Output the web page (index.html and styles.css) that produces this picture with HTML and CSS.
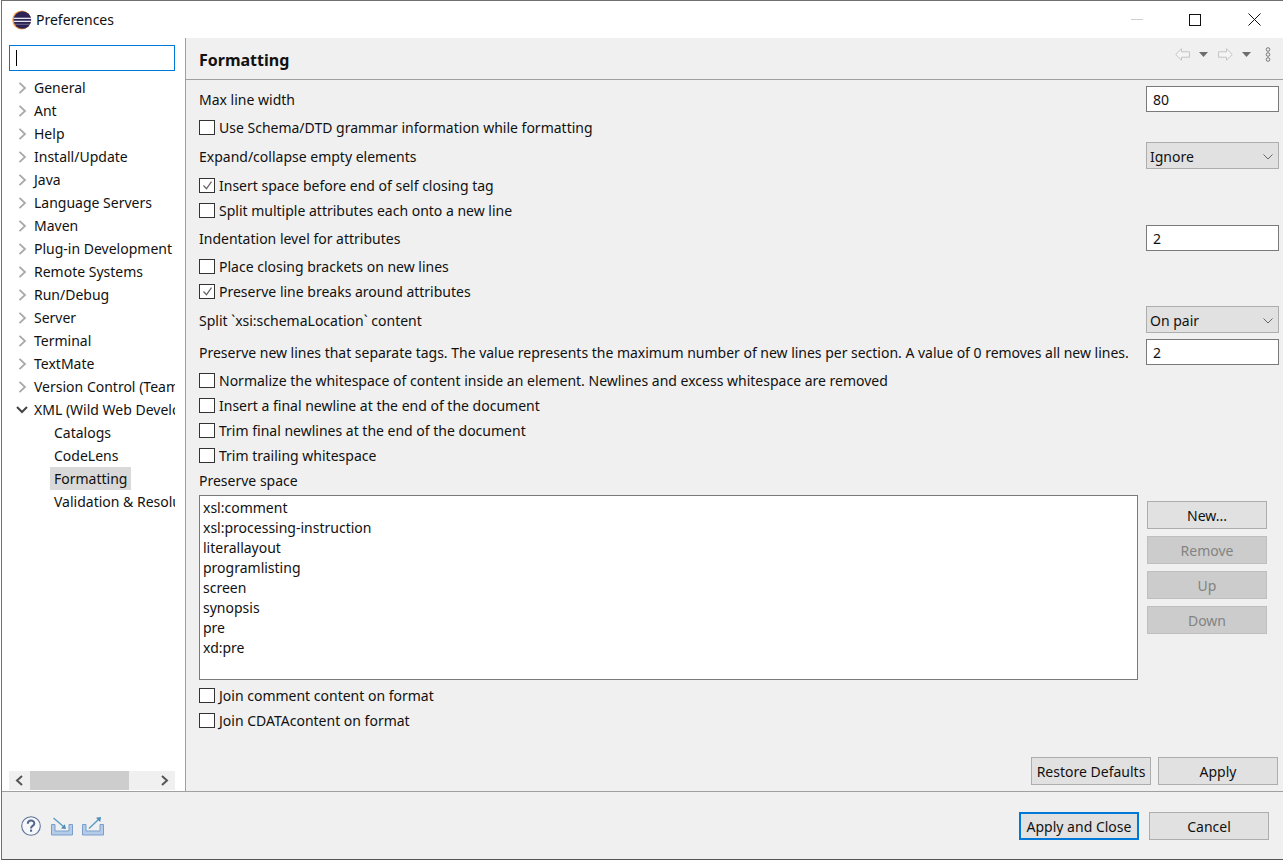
FILE: index.html
```html
<!DOCTYPE html>
<html lang="en">
<head>
<meta charset="utf-8">
<title>Preferences</title>
<link rel="stylesheet" href="styles.css">
</head>
<body>
<div class="window">
  <header class="titlebar">
    <svg class="logo" width="20" height="20" viewBox="0 0 20 20">
      <defs><clipPath id="disc"><circle cx="10.400" cy="10" r="8.800"/></clipPath></defs>
      <circle cx="9.600" cy="10" r="9.400" fill="#f2a14d"/>
      <circle cx="10.400" cy="10" r="8.800" fill="#2c2255"/>
      <g clip-path="url(#disc)">
        <rect x="0" y="7.700" width="20" height="1.300" fill="#e8e6ee"/>
        <rect x="0" y="10.700" width="20" height="1.300" fill="#e8e6ee"/>
        <rect x="0" y="13.800" width="20" height="1" fill="#6f6a92"/>
      </g>
    </svg>
    <span class="title">Preferences</span>
    <div class="winbtns">
      <span class="minimize"></span>
      <span class="maximize"></span>
      <svg class="close" width="13" height="13" viewBox="0 0 13 13"><path d="M.5.5l12 12M12.500.5l-12 12" stroke="#111" fill="none"/></svg>
    </div>
  </header>
  <div class="main">
    <aside class="sidebar">
      <div class="search"><span class="caret"></span></div>
      <ul class="tree">
        <li class="node"><svg class="arrow" width="10" height="12" viewBox="0 0 10 12"><path d="M1.500.8l5.500 5.200-5.500 5.200" fill="none" stroke="#a9a9a9" stroke-width="1.800"/></svg>General</li>
        <li class="node"><svg class="arrow" width="10" height="12" viewBox="0 0 10 12"><path d="M1.500.8l5.500 5.200-5.500 5.200" fill="none" stroke="#a9a9a9" stroke-width="1.800"/></svg>Ant</li>
        <li class="node"><svg class="arrow" width="10" height="12" viewBox="0 0 10 12"><path d="M1.500.8l5.500 5.200-5.500 5.200" fill="none" stroke="#a9a9a9" stroke-width="1.800"/></svg>Help</li>
        <li class="node"><svg class="arrow" width="10" height="12" viewBox="0 0 10 12"><path d="M1.500.8l5.500 5.200-5.500 5.200" fill="none" stroke="#a9a9a9" stroke-width="1.800"/></svg>Install/Update</li>
        <li class="node"><svg class="arrow" width="10" height="12" viewBox="0 0 10 12"><path d="M1.500.8l5.500 5.200-5.500 5.200" fill="none" stroke="#a9a9a9" stroke-width="1.800"/></svg>Java</li>
        <li class="node"><svg class="arrow" width="10" height="12" viewBox="0 0 10 12"><path d="M1.500.8l5.500 5.200-5.500 5.200" fill="none" stroke="#a9a9a9" stroke-width="1.800"/></svg>Language Servers</li>
        <li class="node"><svg class="arrow" width="10" height="12" viewBox="0 0 10 12"><path d="M1.500.8l5.500 5.200-5.500 5.200" fill="none" stroke="#a9a9a9" stroke-width="1.800"/></svg>Maven</li>
        <li class="node"><svg class="arrow" width="10" height="12" viewBox="0 0 10 12"><path d="M1.500.8l5.500 5.200-5.500 5.200" fill="none" stroke="#a9a9a9" stroke-width="1.800"/></svg>Plug-in Development</li>
        <li class="node"><svg class="arrow" width="10" height="12" viewBox="0 0 10 12"><path d="M1.500.8l5.500 5.200-5.500 5.200" fill="none" stroke="#a9a9a9" stroke-width="1.800"/></svg>Remote Systems</li>
        <li class="node"><svg class="arrow" width="10" height="12" viewBox="0 0 10 12"><path d="M1.500.8l5.500 5.200-5.500 5.200" fill="none" stroke="#a9a9a9" stroke-width="1.800"/></svg>Run/Debug</li>
        <li class="node"><svg class="arrow" width="10" height="12" viewBox="0 0 10 12"><path d="M1.500.8l5.500 5.200-5.500 5.200" fill="none" stroke="#a9a9a9" stroke-width="1.800"/></svg>Server</li>
        <li class="node"><svg class="arrow" width="10" height="12" viewBox="0 0 10 12"><path d="M1.500.8l5.500 5.200-5.500 5.200" fill="none" stroke="#a9a9a9" stroke-width="1.800"/></svg>Terminal</li>
        <li class="node"><svg class="arrow" width="10" height="12" viewBox="0 0 10 12"><path d="M1.500.8l5.500 5.200-5.500 5.200" fill="none" stroke="#a9a9a9" stroke-width="1.800"/></svg>TextMate</li>
        <li class="node"><svg class="arrow" width="10" height="12" viewBox="0 0 10 12"><path d="M1.500.8l5.500 5.200-5.500 5.200" fill="none" stroke="#a9a9a9" stroke-width="1.800"/></svg>Version Control (Team)</li>
        <li class="node"><svg class="arrow open" width="12" height="12" viewBox="0 0 12 12"><path d="M1 3l5 5 5-5" fill="none" stroke="#444" stroke-width="2"/></svg>XML (Wild Web Developer)</li>
        <li class="child">Catalogs</li>
        <li class="child">CodeLens</li>
        <li class="child"><span class="selected">Formatting</span></li>
        <li class="child">Validation &amp; Resolution</li>
      </ul>
      <div class="hscroll">
        <svg width="21" height="19" viewBox="0 0 21 19"><path d="M13 5l-5 4.500 5 4.500" fill="none" stroke="#555" stroke-width="2"/></svg>
        <div class="track"><div class="thumb"></div></div>
        <svg width="21" height="19" viewBox="0 0 21 19"><path d="M8 5l5 4.500-5 4.500" fill="none" stroke="#555" stroke-width="2"/></svg>
      </div>
    </aside>
    <section class="content">
      <div class="pagehead">
        <h1>Formatting</h1>
        <div class="navicons">
          <svg width="15" height="13" viewBox="0 0 15 13"><path d="M.7 6.500L6.500 .8v3h8v5.400h-8v3z" fill="#f4f4f4" stroke="#c4c4c4"/></svg>
          <svg class="drop" width="9" height="5" viewBox="0 0 9 5"><path d="M0 0h9L4.500 5z" fill="#6d6d6d"/></svg>
          <svg class="fwd" width="15" height="13" viewBox="0 0 15 13"><path d="M14.300 6.500L8.500 .8v3h-8v5.400h8v3z" fill="#f4f4f4" stroke="#c4c4c4"/></svg>
          <svg class="drop" width="9" height="5" viewBox="0 0 9 5"><path d="M0 0h9L4.500 5z" fill="#6d6d6d"/></svg>
          <svg class="dots" width="6" height="15" viewBox="0 0 6 15"><circle cx="3" cy="2.500" r="1.800" fill="none" stroke="#777"/><circle cx="3" cy="7.500" r="1.800" fill="none" stroke="#777"/><circle cx="3" cy="12.500" r="1.800" fill="none" stroke="#777"/></svg>
        </div>
      </div>
      <div class="form">
        <div class="row r1"><span>Max line width</span><div class="input">80</div></div>
        <label class="check gap3"><span class="box"></span>Use Schema/DTD grammar information while formatting</label>
        <div class="row gap2"><span class="lower">Expand/collapse empty elements</span><div class="combo">Ignore<svg width="10" height="6" viewBox="0 0 10 6"><path d="M.5.5L5 5 9.500.5" fill="none" stroke="#666"/></svg></div></div>
        <label class="check gap4"><span class="box"><svg width="13" height="13" viewBox="0 0 13 13"><path d="M2.500 6.500l3 3.200 5-7" fill="none" stroke="#666" stroke-width="1.200"/></svg></span>Insert space before end of self closing tag</label>
        <label class="check"><span class="box"></span>Split multiple attributes each onto a new line</label>
        <div class="row gap2"><span>Indentation level for attributes</span><div class="input">2</div></div>
        <label class="check gap3"><span class="box"></span>Place closing brackets on new lines</label>
        <label class="check"><span class="box"><svg width="13" height="13" viewBox="0 0 13 13"><path d="M2.500 6.500l3 3.200 5-7" fill="none" stroke="#666" stroke-width="1.200"/></svg></span>Preserve line breaks around attributes</label>
        <div class="row gap2"><span class="lower">Split `xsi:schemaLocation` content</span><div class="combo">On pair<svg width="10" height="6" viewBox="0 0 10 6"><path d="M.5.5L5 5 9.500.5" fill="none" stroke="#666"/></svg></div></div>
        <div class="row gap6"><span class="long">Preserve new lines that separate tags. The value represents the maximum number of new lines per section. A value of 0 removes all new lines.</span><div class="input">2</div></div>
        <label class="check gap3"><span class="box"></span>Normalize the whitespace of content inside an element. Newlines and excess whitespace are removed</label>
        <label class="check"><span class="box"></span>Insert a final newline at the end of the document</label>
        <label class="check"><span class="box"></span>Trim final newlines at the end of the document</label>
        <label class="check"><span class="box"></span>Trim trailing whitespace</label>
        <div class="plain">Preserve space</div>
        <div class="listrow">
          <ul class="list">
            <li>xsl:comment</li>
            <li>xsl:processing-instruction</li>
            <li>literallayout</li>
            <li>programlisting</li>
            <li>screen</li>
            <li>synopsis</li>
            <li>pre</li>
            <li>xd:pre</li>
          </ul>
          <div class="listbtns">
            <button class="btn">New...</button>
            <button class="btn off">Remove</button>
            <button class="btn off">Up</button>
            <button class="btn off">Down</button>
          </div>
        </div>
        <label class="check gap3"><span class="box"></span>Join comment content on format</label>
        <label class="check"><span class="box"></span>Join CDATAcontent on format</label>
      </div>
      <div class="pagebtns">
        <button class="btn">Restore Defaults</button>
        <button class="btn">Apply</button>
      </div>
    </section>
  </div>
  <footer class="footer">
    <div class="footicons">
      <svg width="20" height="20" viewBox="0 0 20 20"><circle cx="10" cy="10" r="9.300" fill="#f6f7fa" stroke="#5d7397" stroke-width="1.100"/><path d="M6.800 7.800c0-4.300 6.500-4.300 6.500-.4 0 2.600-3.300 2.400-3.300 5" fill="none" stroke="#50668c" stroke-width="2"/><rect x="9" y="13.600" width="2.100" height="2.100" fill="#50668c"/></svg>
      <svg class="imp" width="22" height="20" viewBox="0 0 22 20"><path d="M.5 8.500h3.500v6.500h14V8.500h3.500v10.500H.5z" fill="#b4cce8" stroke="#7a9fcd"/><path d="M2.500 2l10.500 9" stroke="#5a9bc4" stroke-width="1.400" fill="none"/><path d="M15 13l-5-.6 3.800-4.200z" fill="#4b8db8"/></svg>
      <svg class="exp" width="22" height="20" viewBox="0 0 22 20"><path d="M.5 8.500h3.500v6.500h14V8.500h3.500v10.500H.5z" fill="#b4cce8" stroke="#7a9fcd"/><path d="M7 12.500L17 3" stroke="#5a9bc4" stroke-width="1.400" fill="none"/><path d="M19 1l-.8 5-4.200-4.200z" fill="#4b8db8"/></svg>
    </div>
    <div class="footbtns">
      <button class="btn primary">Apply and Close</button>
      <button class="btn">Cancel</button>
    </div>
  </footer>
</div>
</body>
</html>
```
FILE: styles.css
```css
* { box-sizing: border-box; }
html, body { margin: 0; padding: 0; height: 100%; }
body { background: #fff; font-family: "Noto Sans", "Open Sans", sans-serif; font-size: 14px; color: #111; overflow: hidden; }
ul { list-style: none; margin: 0; padding: 0; }
.window { width: 1282px; height: 860px; margin-left: 1px; border-left: 1px solid #707070; border-top: 1px solid #707070; border-bottom: 1px solid #555; display: flex; flex-direction: column; background: #f0f0f0; }
.titlebar { height: 37px; background: #fff; display: flex; align-items: center; padding-left: 10px; flex: none; }
.logo { flex: none; }
.title { margin-left: 4px; }
.winbtns { margin-left: auto; display: flex; align-items: center; height: 100%; margin-right: 22px; }
.minimize { width: 12px; height: 1px; background: #cfcfcf; }
.maximize { width: 12px; height: 12px; border: 1px solid #111; margin-left: 46px; }
.close { margin-left: 47px; }
.main { flex: 1; display: flex; min-height: 0; }
.sidebar { width: 184px; background: #fff; border-right: 1px solid #a0a0a0; flex: none; padding: 7px 10px 1px 7px; display: flex; flex-direction: column; }
.search { height: 26px; border: 1px solid #0078d7; background: #fff; padding: 4px 6px; flex: none; }
.caret { display: block; width: 1px; height: 16px; background: #000; }
.tree { flex: 1; margin-top: 4.5px; overflow: hidden; white-space: nowrap; }
.tree li { height: 23px; line-height: 23px; }
.node { display: flex; align-items: center; padding-left: 25px; position: relative; }
.arrow { position: absolute; left: 9px; top: 6px; }
.arrow.open { left: 7px; }
.child { padding-left: 45px; }
.selected { display: inline-block; background: #d9d9d9; margin-left: -4px; padding: 0 4px; height: 23px; }
.hscroll { height: 19px; display: flex; background: #f0f0f0; flex: none; align-items: center; }
.track { flex: 1; height: 100%; }
.thumb { width: 99px; height: 100%; background: #cdcdcd; }
.content { flex: 1; display: flex; flex-direction: column; min-width: 0; }
.pagehead { height: 42px; flex: none; border-bottom: 1px solid #a0a0a0; display: flex; align-items: center; padding: 0 12px 0 13px; }
h1 { margin: 2px 0 0; font-size: 16px; font-weight: 700; color: #111; }
.navicons { margin-left: auto; display: flex; align-items: center; margin-top: -8px; }
.drop { margin-left: 9px; }
.fwd { margin-left: 10px; }
.dots { margin-left: 14px; }
.form { flex: 1; padding: 6px 4px 0 13px; display: flex; flex-direction: column; min-height: 0; }
.row { display: flex; align-items: center; justify-content: space-between; flex: none; }
.gap4 { margin-top: 4px; }
.gap3 { margin-top: 3px; }
.gap2 { margin-top: 2px; }
.gap6 { margin-top: 6px; }
.lower { padding-top: 2px; }
.long { letter-spacing: -0.015px; }
.input { width: 133px; height: 26px; border: 1px solid #7a7a7a; background: #fff; padding: 0 6px; line-height: 26px; }
.combo { width: 133px; height: 27px; border: 1px solid #adadad; background: #e1e1e1; padding: 2px 5px 0 3px; display: flex; align-items: center; justify-content: space-between; }
.check { height: 25px; display: flex; align-items: center; flex: none; }
.box { width: 16px; height: 15px; border: 1px solid #333; background: #fff; margin-right: 4px; flex: none; display: flex; align-items: center; justify-content: center; }
.plain { height: 25px; line-height: 25px; flex: none; }
.listrow { display: flex; margin-top: 2px; flex: none; }
.list { width: 939px; height: 185px; border: 1px solid #7a7a7a; background: #fff; padding: 2px 3px; flex: none; }
.list li { height: 20px; line-height: 20px; }
.listbtns { display: flex; flex-direction: column; gap: 7px; margin-left: 9px; padding-top: 6px; }
.btn { font: inherit; color: #111; width: 120px; height: 28px; border: 1px solid #adadad; background: #e1e1e1; padding: 0; flex: none; }
.btn.off { background: #ccc; border-color: #bfbfbf; color: #838383; }
.btn.primary { border: 2px solid #0078d7; }
.pagebtns { display: flex; justify-content: flex-end; gap: 7px; padding: 0 5px 6px 0; flex: none; }
.footer { height: 68px; flex: none; border-top: 1px solid #a0a0a0; display: flex; align-items: center; padding: 0 14px 0 19px; }
.footicons { display: flex; align-items: center; }
.imp { margin-left: 10px; }
.exp { margin-left: 9px; }
.footbtns { margin-left: auto; display: flex; gap: 10px; }
.footbtns .btn { padding-top: 2px; }
```
